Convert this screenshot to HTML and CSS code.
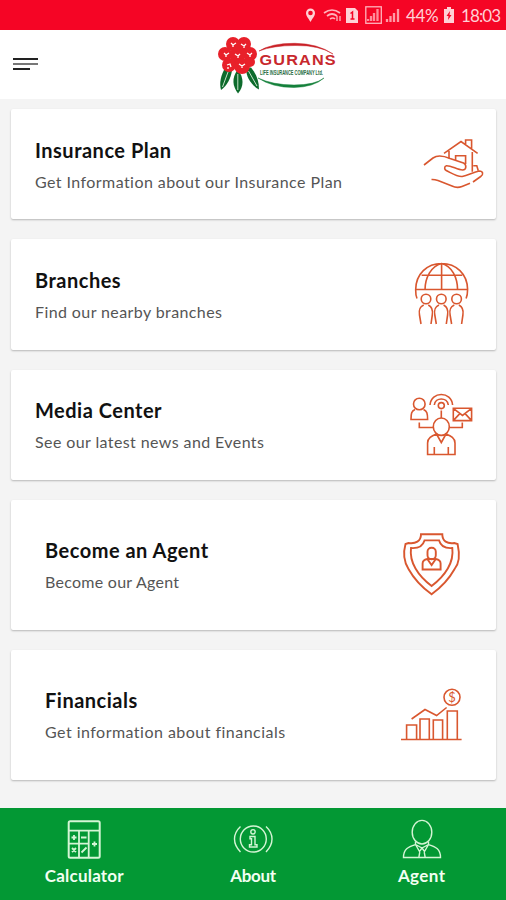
FILE: index.html
```html
<!DOCTYPE html>
<html lang="en">
<head>
    <meta charset="UTF-8">
    <meta name="viewport" content="width=device-width, initial-scale=1.0">
    <title>Gurans Life Insurance</title>
    <link rel="stylesheet" href="styles.css">
</head>
<body>
    <div class="status-bar">
        <svg class="status-icons" viewBox="0 0 98 20" width="98" height="20">
            <!-- location -->
            <path d="M7.500 17C5 12.500 3 11 3 8a4.500 4.500 0 0 1 9 0c0 3-2 4.500-4.500 9z" fill="#ffd0d5"/>
            <circle cx="7.500" cy="8" r="2.300" fill="#f50525"/>
            <!-- wifi -->
            <g fill="none" stroke="#ffb3bc" stroke-width="1.700">
                <path d="M21 8q8-6 16 0M24 11q5-4 10 0M27 14q3-2 5 0"/>
                <path d="M34 11v5M37 11v5" stroke-width="1.300"/>
            </g>
            <!-- sim -->
            <path d="M43 3h9l3 3v12H43z" fill="#ffd0d5"/>
            <path d="M47.500 8.500l2-1.500v7M47.500 14h4" fill="none" stroke="#f50525" stroke-width="1.500"/>
            <!-- signal -->
            <rect x="62.800" y="1.800" width="15.500" height="16.500" fill="none" stroke="#ffb3bc" stroke-width="1.300"/>
            <path d="M65 16v-2M68 16v-5M71 16V8M74.500 16V4" stroke="#ff8c9a" stroke-width="2.300"/>
            <path d="M84 17v-3M87.500 17v-6M91 17V8M95 17V4" stroke="#ff9aa6" stroke-width="2.300"/>
        </svg>
        <span class="percent">44%</span>
        <svg class="battery" viewBox="0 0 12 16" width="12" height="16">
            <path d="M4 0h4v2h3v14H1V2h3z" fill="#ffd0d5"/>
            <path d="M7 4L3.500 9h2L5 13l3.500-5h-2z" fill="#f50525"/>
        </svg>
        <span class="time">18:03</span>
    </div>

    <div class="header">
        <div class="menu">
            <span></span>
            <span></span>
            <span></span>
        </div>
        <svg class="logo" viewBox="0 0 130 60" width="130" height="60">
            <g fill="#0d6b2c">
                <path d="M9 33c-4 7-6 15-4 22 6-4 10-12 11-20z"/>
                <path d="M21.500 35c-6 8-5 16 .5 23.500 6-7 6-16 0-23.500z"/>
                <path d="M30 33c0 9 5 17 13 21.500 0-9-3-16-8-22z"/>
            </g>
            <path d="M12 37L6.500 52M21.800 39v16M32.500 36l8.500 15" stroke="#c7e3c9" stroke-width="1" fill="none"/>
            <g fill="#e8202a">
                <circle cx="17" cy="9" r="7"/>
                <circle cx="28" cy="9" r="7"/>
                <circle cx="9" cy="19" r="7"/>
                <circle cx="21.500" cy="20" r="8"/>
                <circle cx="34" cy="19" r="7"/>
                <circle cx="13" cy="30" r="7"/>
                <circle cx="26" cy="31" r="8"/>
                <circle cx="34" cy="27" r="5"/>
            </g>
            <path d="M15 8l2 2 3-2M17 10v2M25 9l3 2 2-2M28 11v2M8 18l2 2 3-2M10 20v2M19 19l3 2 2-2M22 21v2M31 18l3 2 2-2M34 20v2M11 30l3-1 1 3M12 32v2M23 29l3 2 3-2M26 31v2" fill="none" stroke="#fff" stroke-width="1.300"/>
            <path d="M43 16Q56 8 79 8.300T117 19Q103 10 79 10.500 57 10.500 43 16z" fill="#c92127" stroke="#c92127" stroke-width=".5"/>
            <path d="M42 43Q57 50 78 50T108 43Q98 52 78 52.500 56 52.500 42 43z" fill="#15803b" stroke="#15803b" stroke-width=".5"/>
            <text class="logo-name" transform="translate(43.500 29.600) scale(1.160 1)">GURANS</text>
            <text class="logo-sub" transform="translate(44 40) scale(.57 1)">LIFE INSURANCE COMPANY Ltd.</text>
        </svg>
    </div>

    <div class="list">
        <div class="card first">
            <div class="text">
                <h2 class="t-plan">Insurance Plan</h2>
                <p class="s-plan">Get Information about our Insurance Plan</p>
            </div>
            <svg class="icon" viewBox="0 0 64 64">
                <path d="M22 21.300L39 9.500l16.600 11.800M43.600 12V8h6v8.500M27 19v7.500M50.300 20v19.700M33.600 28v-4.300h10V32M51.300 33.700h3.500l1.500 5"/>
                <path d="M2 33l9-7c5-3.500 11-2 17 .5l13.500 4.500c3 1.500 3.500 7-1 7-5 0-11-4.500-16-4.300-2.500.5-2.300 3.800-.3 4.800 6 3 11 6.500 16 6 6-1 11-4.500 17-5.500 4 0 4.500 3.500 1.500 5.500L51 50M48 51.300l-8 3.200c-4 1.500-7 1-10-.5L16 48.500c-3-1-4-1.200-6.500-1"/>
            </svg>
        </div>

        <div class="card">
            <div class="text">
                <h2 class="t-branches">Branches</h2>
                <p class="s-branches">Find our nearby branches</p>
            </div>
            <svg class="icon" viewBox="0 0 64 64">
                <path d="M8 36.500C6.500 33.500 6.700 30 6.700 27.300 7 12 18 1.500 32.600 1.500s25.700 10.500 26 25.800c0 3 0 6-1.500 9.200M6.700 27.500h52M12.600 13.300h40.700M32.600 1.500v26M16 28C16 16 22 4 32.600 1.500 43 4 48.600 16 48.600 28"/>
                <circle cx="17" cy="37" r="4.800"/>
                <circle cx="32.300" cy="37" r="4.800"/>
                <circle cx="47.600" cy="37" r="4.800"/>
                <path d="M12 62l-1.500-9c-.8-5-.3-8 4.200-10M19.300 43c4 2 4.800 5 4 10L22 62M27.300 62l-1.500-9c-.8-5-.3-8 4.200-10M34.600 43c4 2 4.800 5 4 10l-1.300 9M42.600 62l-1.500-9c-.8-5-.3-8 4.200-10M49.900 43c4 2 4.800 5 4 10l-1.300 9"/>
            </svg>
        </div>

        <div class="card">
            <div class="text">
                <h2 class="t-media">Media Center</h2>
                <p class="s-media">See our latest news and Events</p>
            </div>
            <svg class="icon" viewBox="0 0 64 64">
                <circle cx="10.300" cy="11" r="5.800"/>
                <path d="M6 16.500c-3.500 1.500-4 4-4 10h16.600c0-6-.6-8.500-4.100-10"/>
                <circle cx="32.300" cy="12.600" r="3"/>
                <path d="M21 12c1-14 21.600-14 22.600 0M25.300 12c1-8 13-8 14 0M32.300 17.600V25"/>
                <path d="M44.300 15.300h18.300v12.300H44.300zM44.300 15.300l9.200 7.200 9.100-7.200M44.300 27.600l6.500-7M62.600 27.600l-6.500-7"/>
                <ellipse cx="32.300" cy="33.700" rx="8" ry="8.700"/>
                <path d="M10.300 29.600v4.900h14M53.300 29.600v4.900h-13"/>
                <path d="M27.500 41c-5 2-8.900 4-8.900 9v11.500H46V50c0-5-4-7-9-9l-4.700 8.500zM25.300 54v7.500M39.300 54v7.500"/>
            </svg>
        </div>

        <div class="card big">
            <div class="text">
                <h2 class="t-agent">Become an Agent</h2>
                <p class="s-agent">Become our Agent</p>
            </div>
            <svg class="icon thick" viewBox="0 0 64 64">
                <path d="M21 1.300h21.300c0 7 5 9.700 12 8.700l3.300 1c2 9 2 19-3 25-5 9-13 18-23 25.300C21.500 54 13.500 45 8.500 36c-5-8-5.500-16-3-25l3-1c7 1 12.500-1.700 12.500-8.700z"/>
                <path d="M24.500 7.400h14.600c1.400 5 5.900 8.200 13.200 7.600 1 8-1.300 15-4.500 20.500-4 7-9.600 12.500-16.200 17.500C25 48 19.500 42.500 15.500 35.500 12.300 30 10 23 11 15c7.300.6 12-2.600 13.500-7.600z"/>
                <rect x="27.500" y="14.800" width="8.300" height="11.500" rx="4"/>
                <path d="M27.300 26c-3.500.7-4.700 2-4.700 4.500v6h18v-6c0-2.500-1.200-3.800-4.800-4.500l-4.200 6zM27.300 26h8.500"/>
            </svg>
        </div>

        <div class="card big">
            <div class="text">
                <h2 class="t-fin">Financials</h2>
                <p class="s-fin">Get information about financials</p>
            </div>
            <svg class="icon" viewBox="0 0 64 64">
                <path d="M1 56.500h60.600M6.600 56.500V42h10v14.500M20 56.500V36h9.300v20.500M33.300 56.500V37h9.300v19.500M47.300 56.500V28h10v28.500M11.600 36L25 26.500l11.600 6 10-8"/>
                <circle cx="52" cy="14.300" r="8"/>
                <text class="coin" x="52" y="19">$</text>
            </svg>
        </div>
    </div>

    <div class="bottom-nav">
        <div class="nav-item">
            <svg viewBox="0 0 40 40" width="40" height="40">
                <rect x="4.700" y="2.300" width="31" height="36.400" rx="1.500" stroke-width="2"/>
                <path class="keys" d="M5 11.700h31M15 12v26M24.700 12v26M5 24.700h20"/>
                <path class="keys" d="M7.500 18.500h5M10 16v5M17 18.500h5.500M8 29l4 4M12 29l-4 4M17.500 33.500l5-5M28 25h5M30.500 22.500v5"/>
            </svg>
            <span class="n-calc">Calculator</span>
        </div>
        <div class="nav-item">
            <svg viewBox="0 0 40 40" width="40" height="40">
                <circle cx="20.300" cy="20" r="13"/>
                <path d="M7.500 7.500C-.5 15-.5 25 7.500 33M33 7.500c8 7.500 8 17.500 0 25.500"/>
                <circle cx="20" cy="12.800" r="2.200"/>
                <path d="M17 17.500h5v8.300h2V28h-7.500v-2.200h2v-6H17z"/>
            </svg>
            <span class="n-about">About</span>
        </div>
        <div class="nav-item">
            <svg viewBox="0 0 40 40" width="40" height="40">
                <ellipse cx="20" cy="13.200" rx="9.800" ry="11.800"/>
                <path d="M13.500 22.500v3.200C6 28 1.500 30 1.500 38.500h37C38.500 30 34 28 26.500 25.700v-3.200M13.500 25.500l4 7 2.500-3.500 2.500 3.500 4-7M13.500 25.500L20 29l6.500-3.500M17.800 33l-1 5.500M22.200 33l1 5.500"/>
            </svg>
            <span class="n-agent">Agent</span>
        </div>
    </div>
</body>
</html>
```

FILE: styles.css
```css
body {
    font-family: Lato, 'Open Sans', sans-serif;
    background: #f4f4f4;
    margin: 0;
    height: 900px;
    display: flex;
    flex-direction: column;
    overflow: hidden;
}
.status-bar {
    height: 30px;
    box-sizing: border-box;
    padding: 0 6px 0 0;
    background: #f50525;
    color: #ffd0d5;
    display: flex;
    justify-content: flex-end;
    align-items: center;
    font-size: 17px;
}
.status-icons {
    margin-right: 5px;
}
.percent {
    width: 33px;
    letter-spacing: -0.3px;
}
.battery {
    margin: 0 6px 0 4px;
}
.time {
    width: 39px;
    letter-spacing: -0.9px;
}
.header {
    height: 69px;
    background: #fff;
    display: flex;
    align-items: center;
}
.menu {
    width: 25px;
    margin: 0 178px 1px 13px;
    display: flex;
    flex-direction: column;
    gap: 3px;
}
.menu span {
    height: 2px;
    background: #222;
}
.menu span:nth-child(2) {
    background: #777;
}
.menu span:last-child {
    width: 17px;
}
.logo-name {
    font-family: 'Liberation Sans', sans-serif;
    font-size: 14px;
    letter-spacing: 1px;
    font-weight: bold;
    fill: #c8282d;
}
.logo-sub {
    font-family: 'Liberation Sans', sans-serif;
    font-size: 7px;
    font-weight: bold;
    fill: #286b3c;
}
.list {
    flex: 1;
    padding: 10px 10px 0 11px;
    display: flex;
    flex-direction: column;
    gap: 20px;
}
.card {
    height: 110.3px;
    box-sizing: border-box;
    padding: 0 23px 0 24px;
    background: #fff;
    border-radius: 2px;
    box-shadow: 0 1px 2px rgba(0, 0, 0, 0.25);
    display: flex;
    justify-content: space-between;
    align-items: center;
}
.card.first {
    padding-right: 10px;
}
.card.big {
    height: 130px;
    padding: 0 32px 0 34px;
}
.text {
    padding-top: 3px;
    white-space: nowrap;
}
h2 {
    margin: 0;
    font-size: 20px;
    line-height: 32px;
    letter-spacing: 0.5px;
    color: #111;
}
p {
    margin: 0;
    font-size: 16px;
    line-height: 32px;
    letter-spacing: 0.4px;
    color: #555;
}
.s-plan {
    letter-spacing: 0.43px;
}
.s-agent {
    letter-spacing: 0.27px;
}
.s-fin {
    letter-spacing: 0.47px;
}
.icon {
    width: 64px;
    height: 64px;
    fill: none;
    stroke: #d9572f;
    stroke-width: 1.6;
}
.icon.thick {
    stroke-width: 1.9;
}
.coin {
    font-size: 13px;
    text-anchor: middle;
    fill: #d9572f;
    stroke: none;
}
.bottom-nav {
    height: 92px;
    background: #039834;
    display: grid;
    grid-template-columns: repeat(3, 1fr);
}
.nav-item {
    padding-top: 11px;
    display: flex;
    flex-direction: column;
    align-items: center;
    color: #f2fff2;
    font-size: 17px;
    font-weight: bold;
    line-height: 34px;
}
.nav-item svg {
    fill: none;
    stroke: #d5f5d5;
    stroke-width: 1.4;
}
.nav-item .keys {
    stroke-width: 1.8;
}
.n-calc {
    letter-spacing: 0.2px;
}
.n-about {
    letter-spacing: -0.3px;
}
.n-agent {
    letter-spacing: 0.4px;
}
```
